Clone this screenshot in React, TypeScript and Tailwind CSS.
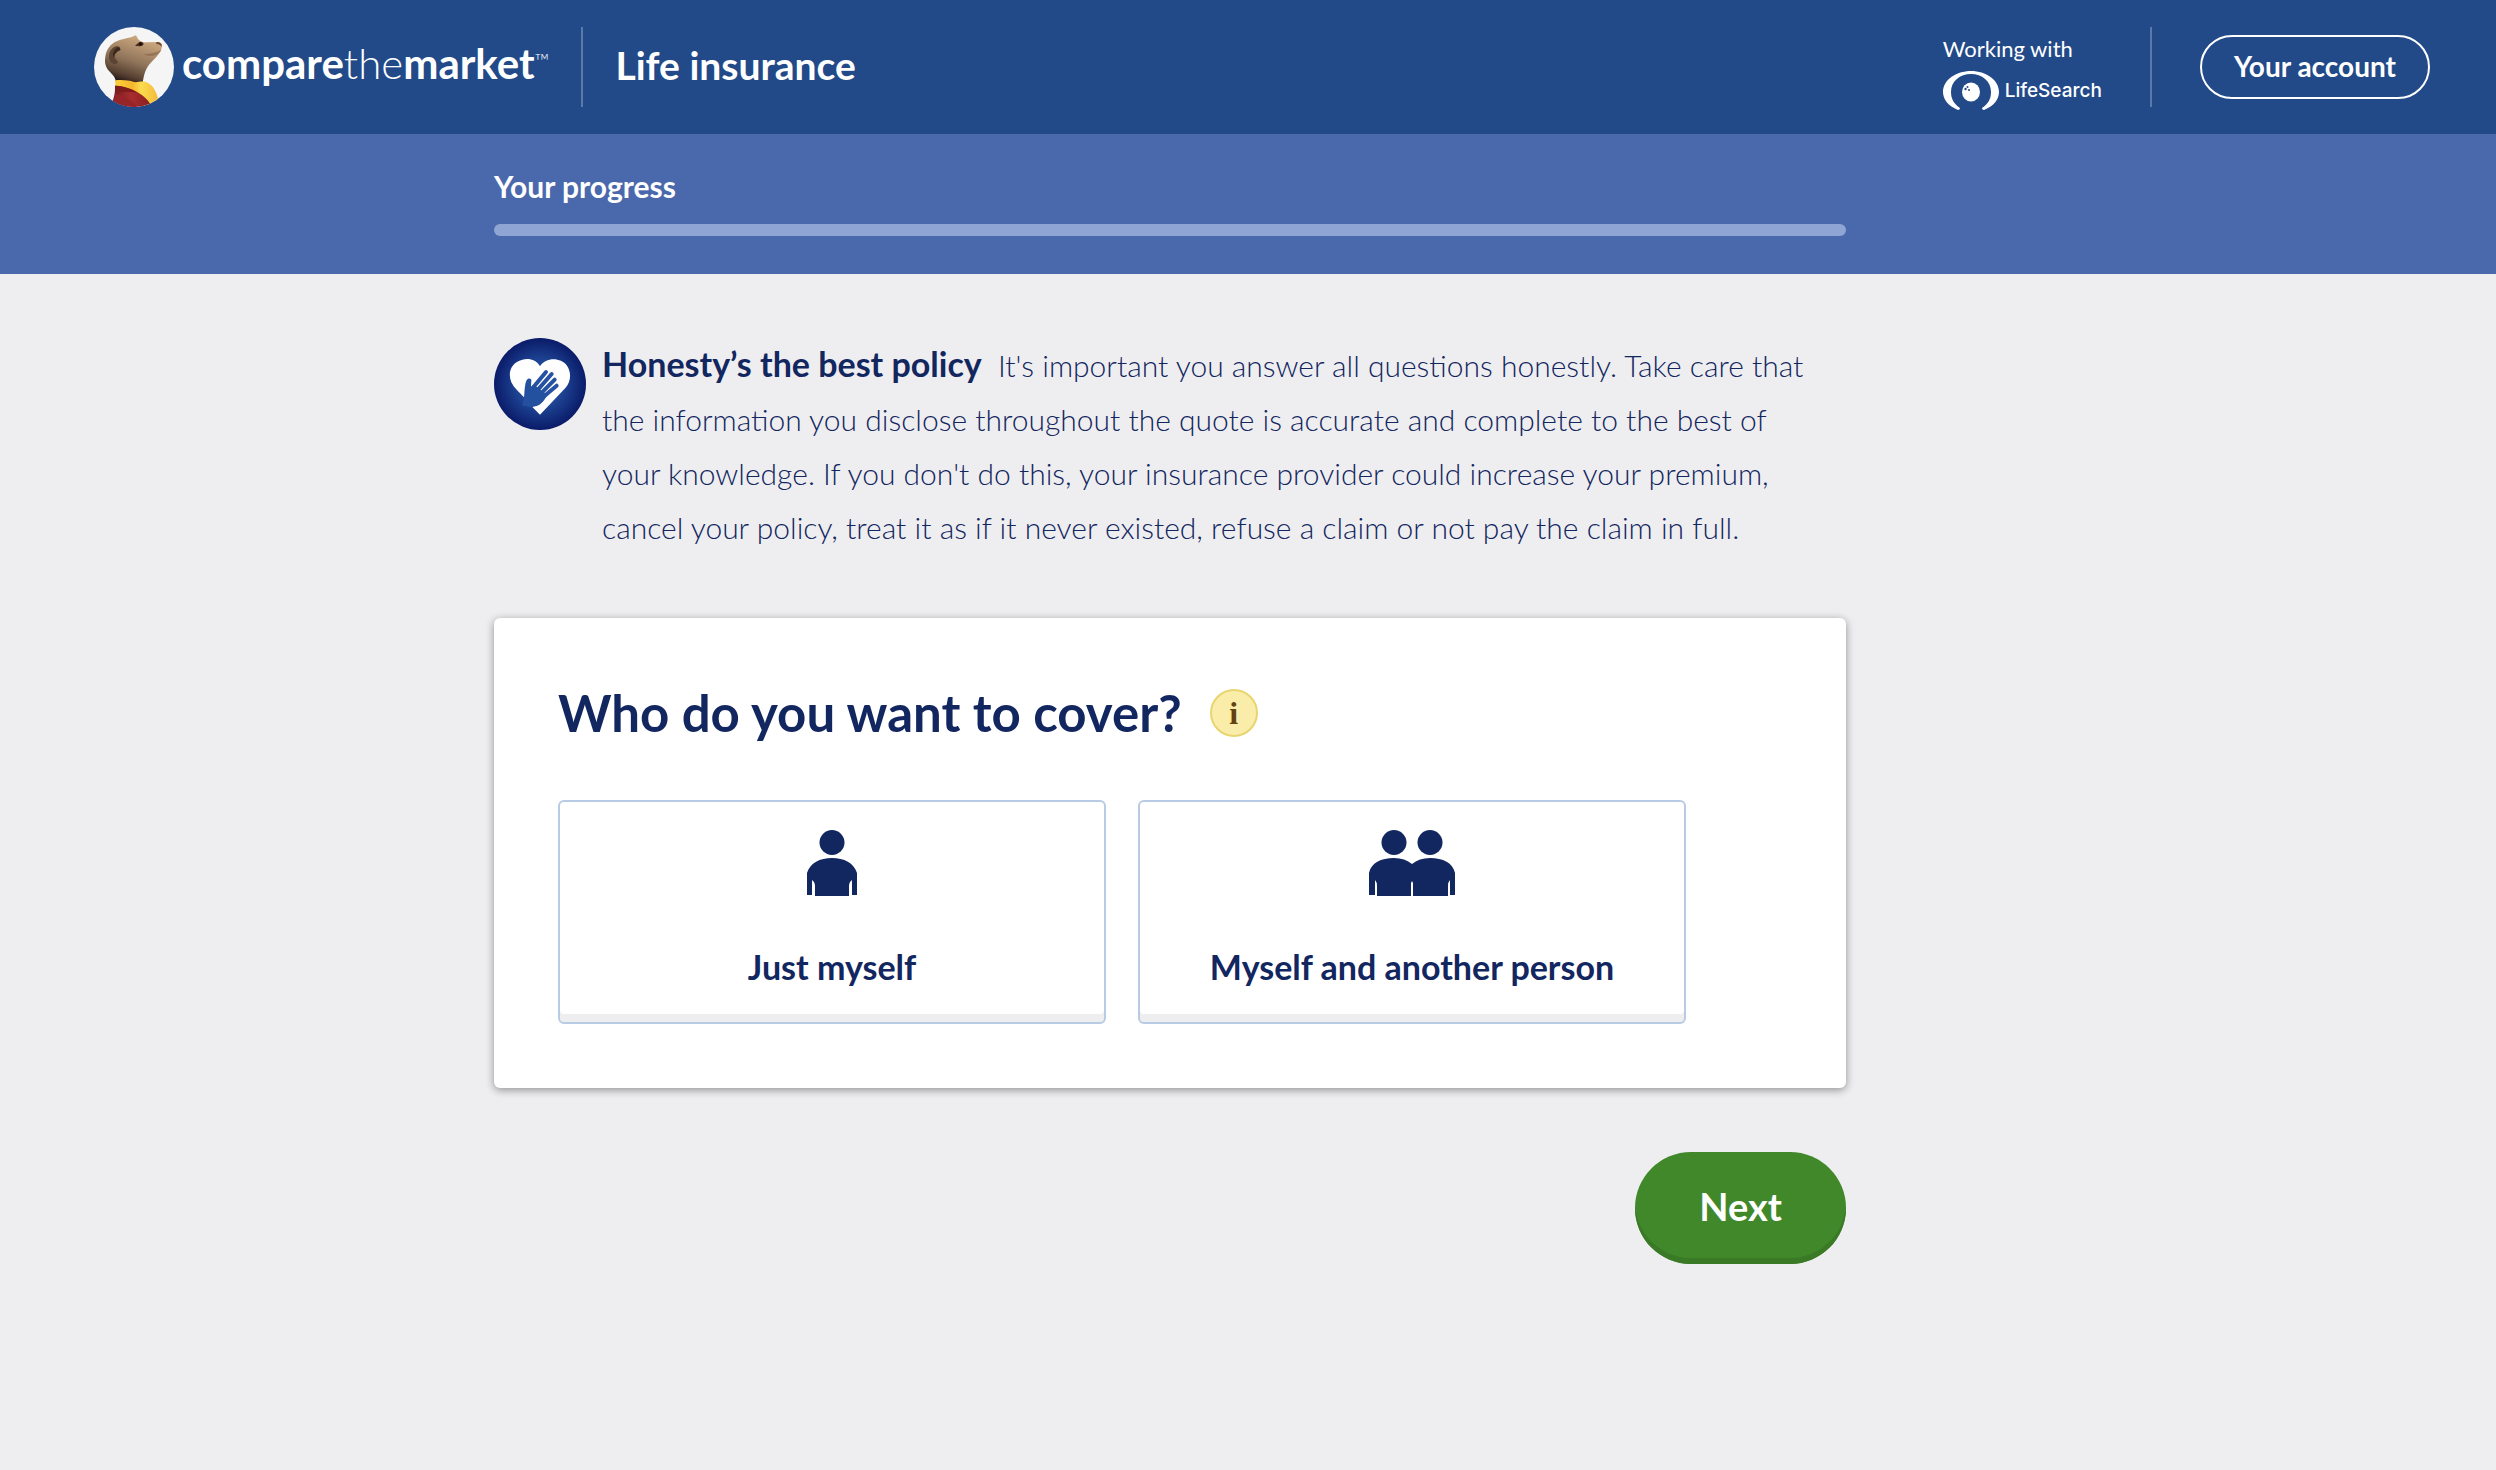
import React, { useState } from 'react';

const MeerkatIcon: React.FC = () => (
  <svg className="size-20 shrink-0" viewBox="12 15 240 240" aria-hidden="true">
    <defs>
      <linearGradient id="fur" x1="0.7" y1="0.1" x2="0.35" y2="1">
        <stop offset="0" stopColor="#c9a57c" />
        <stop offset="0.5" stopColor="#8f745a" />
        <stop offset="0.8" stopColor="#5a4334" />
        <stop offset="1" stopColor="#1f1210" />
      </linearGradient>
      <linearGradient id="scarf" x1="0" y1="0" x2="1" y2="0">
        <stop offset="0" stopColor="#fbd03a" />
        <stop offset="0.4" stopColor="#f6b62c" />
        <stop offset="0.6" stopColor="#fbdc4e" />
        <stop offset="1" stopColor="#f3b93a" />
      </linearGradient>
      <linearGradient id="coat" x1="0" y1="0" x2="1" y2="0">
        <stop offset="0" stopColor="#6d1a1f" />
        <stop offset="0.5" stopColor="#a92c2f" />
        <stop offset="1" stopColor="#86201f" />
      </linearGradient>
      <clipPath id="badge">
        <circle cx="132" cy="135" r="120" />
      </clipPath>
    </defs>
    <circle cx="132" cy="135" r="120" fill="#f5f5f6" />
    <g clipPath="url(#badge)">
      <path
        d="M78 186 C78 166 70 162 58 148 C46 134 43 122 46 104 C49 82 62 66 80 58 C100 49 118 50 138 40 C142 46 142 50 148 55 C154 60 160 62 170 61 L204 60 C214 61 218 68 215 78 C212 92 200 104 188 116 C172 131 162 148 158 184 Z"
        fill="url(#fur)"
      />
      <path d="M158 95 C178 98 198 92 214 84 C204 102 180 108 158 95" fill="#8b6a4c" opacity="0.7" />
      <path d="M200 60 C210 60 217 65 215 74 C212 69 206 66 198 65 Z" fill="#6b4a36" />
      <path d="M134 70 C142 68 146 58 153 59 C160 60 162 64 160 68 C154 74 142 74 134 70" fill="#4a2f22" />
      <path d="M148 62 C153 60 158 64 155 70 C150 72 146 68 148 62" fill="#190b08" />
      <path d="M84 72 C68 72 56 88 57 106 C58 120 68 128 78 126 C88 124 82 116 77 112 C72 104 74 90 88 82 Z" fill="#5c4432" />
      <path d="M88 74 C74 78 66 92 70 106 C74 96 80 88 92 84 Z" fill="#3c281d" />
      <path d="M76 175 C98 173 116 175 132 180 C142 182 152 177 166 179 C190 186 202 214 205 236 L180 262 L110 230 L76 200 Z" fill="url(#scarf)" />
      <path d="M75 191 C108 192 160 208 184 250 L140 262 L62 252 C70 234 76 218 75 191" fill="url(#coat)" />
      <path d="M75 217 C96 220 128 232 142 256 L62 252 C72 236 75 228 75 217" fill="#96252a" />
      <path d="M75 191 C98 191 124 200 142 212 C120 208 98 208 76 212 Z" fill="#7c1d1c" />
    </g>
  </svg>
);

const LifeSearchIcon: React.FC = () => (
  <svg className="h-10 w-14 shrink-0" viewBox="0 0 56 40" fill="#fff" aria-hidden="true">
    <path d="M15 39 C5 35 0 28 0 21 C0 9 13 0 28 0 C43 0 56 9 56 21 C56 28 51 35 41 39 Q39 39 39 37 C45 33 48 28 48 21 C48 10 39 3 28 3 C17 3 8 10 8 21 C8 28 11 33 17 37 Q17 39 15 39 Z" />
    <ellipse cx="28" cy="21" rx="9" ry="9.5" />
    <circle cx="26" cy="19" r="1" fill="#224a89" />
    <circle cx="22.5" cy="18" r="1.2" fill="#224a89" />
    <circle cx="24.5" cy="16" r="1" fill="#224a89" />
  </svg>
);

const HonestyIcon: React.FC = () => (
  <svg className="size-[92px] shrink-0" viewBox="12 12 276 276" aria-hidden="true">
    <defs>
      <radialGradient id="disc">
        <stop offset="0" stopColor="#2756a6" />
        <stop offset="0.5" stopColor="#1e4594" />
        <stop offset="1" stopColor="#0a1b69" />
      </radialGradient>
    </defs>
    <circle cx="150" cy="150" r="138" fill="url(#disc)" />
    <path
      d="M150 97 C139 77 117 72 97 77 C64 85 52 115 64 145 C72 162 86 173 102 190 L127 219 L150 242 L226 162 C244 143 244 113 231 95 C211 69 167 70 150 97 Z"
      fill="#fff"
    />
    <g stroke="#2552a2" strokeWidth="12" strokeLinecap="round">
      <path d="M130 160 L168 114" />
      <path d="M142 169 L185 120" />
      <path d="M150 181 L194 137" />
      <path d="M155 193 L200 155" />
    </g>
    <path
      d="M102 191 C104 168 104 150 110 138 C114 131 124 132 124 139 L123 158 L130 153 L146 162 L160 176 L176 178 C166 194 158 208 145 214 C139 217 132 218 126 220 L96 214 Z"
      fill="#2450a0"
    />
  </svg>
);

const SinglePersonIcon: React.FC = () => (
  <svg className="h-[66px] w-[50px]" viewBox="0 0 50 66" fill="currentColor" aria-hidden="true">
    <circle cx="25" cy="12.5" r="12.5" />
    <path d="M0 65 V43 C3 33 13 28 25 28 C37 28 47 33 50 43 V65 H45 V50 Q42 52 42 56 V66 H8 V56 Q8 52 5 50 V65 Z" />
  </svg>
);

const TwoPeopleIcon: React.FC = () => (
  <svg className="h-[66px] w-[86px]" viewBox="0 0 86 66" fill="currentColor" aria-hidden="true">
    <circle cx="25" cy="12.5" r="12.5" />
    <circle cx="61" cy="12.5" r="12.5" />
    <path d="M0 65 V43 C2 33 12 28 25 28 Q36 28 43 34 Q50 28 61 28 C74 28 84 33 86 43 V65 H81 V50 Q79 52 79 56 V66 H44 V53 L43 51 L42 53 V66 H8 V56 Q8 52 6 50 V65 Z" />
  </svg>
);

interface OptionProps {
  label: string;
  icon: React.ReactNode;
  selected: boolean;
  onSelect: () => void;
}

const CoverOption: React.FC<OptionProps> = ({ label, icon, selected, onSelect }) => (
  <button
    type="button"
    aria-pressed={selected}
    onClick={onSelect}
    className="flex flex-1 flex-col items-center justify-between rounded-md border-2 border-[#b9cbe4] bg-white px-6 pt-7 pb-8 shadow-[inset_0_-8px_0_#eeeef0] aria-pressed:border-[#12265f]"
  >
    {icon}
    <span className="mt-12 text-[34px] leading-[46px] font-bold">{label}</span>
  </button>
);

export default function App() {
  const [cover, setCover] = useState('');

  return (
    <div className="min-h-screen bg-[#eeeef0] font-[Lato,sans-serif] text-[#12265f]">
      <header className="flex h-[134px] items-center justify-between bg-[#224a89] pr-[66px] pl-[94px] text-white">
        <div className="flex items-center">
          <a href="#" className="flex items-center gap-2" aria-label="comparethemarket home">
            <MeerkatIcon />
            <span className="flex items-start pb-2 text-[42px] leading-none">
              <b className="font-bold">compare</b>
              <span className="font-light">the</span>
              <b className="font-bold">market</b>
              <span className="text-[20px] leading-9 font-light">™</span>
            </span>
          </a>
          <div className="ml-8 h-20 w-0.5 bg-[#5b7aab]" />
          <h1 className="ml-8 pb-1 text-[39px] leading-none font-bold">Life insurance</h1>
        </div>
        <div className="flex items-center gap-12">
          <div className="flex flex-col gap-1 pt-2">
            <span className="text-[22px] leading-9">Working with</span>
            <a href="#" className="flex items-center gap-1.5">
              <LifeSearchIcon />
              <span className="font-[Inter,sans-serif] text-[19px] font-medium">LifeSearch</span>
            </a>
          </div>
          <div className="h-20 w-0.5 bg-[#5b7aab]" />
          <button type="button" className="h-16 rounded-full border-2 border-white px-8 pb-0.5 text-[28px] font-bold">
            Your account
          </button>
        </div>
      </header>

      <section className="bg-[#4a69ac]">
        <div className="mx-auto h-[140px] max-w-[1508px] pt-8 pr-[156px] text-white">
          <p id="progress-label" className="text-3xl leading-10 font-bold">Your progress</p>
          <div
            role="progressbar"
            aria-labelledby="progress-label"
            aria-valuenow={0}
            className="mt-[18px] h-3 rounded-full bg-[#8fa5d3]"
          />
        </div>
      </section>

      <main className="mx-auto max-w-[1508px] pt-16 pr-[156px] pb-16">
        <div className="flex gap-4">
          <HonestyIcon />
          <p className="pr-5 text-3xl leading-[54px] font-light">
            <strong className="mr-2 text-[34px] leading-10 font-bold">Honesty’s the best policy</strong> It's important you
            answer all questions honestly. Take care that the information you disclose throughout the quote is
            accurate and complete to the best of your knowledge. If you don't do this, your insurance provider
            could increase your premium, cancel your policy, treat it as if it never existed, refuse a claim or
            not pay the claim in full.
          </p>
        </div>

        <section className="mt-16 rounded-md bg-white p-16 shadow-[0_2px_8px_rgba(0,0,0,0.4)]">
          <div className="flex items-center gap-7">
            <h2 className="text-[51px] leading-[62px] font-bold">Who do you want to cover?</h2>
            <button
              type="button"
              aria-label="More information"
              className="size-12 rounded-full border-2 border-[#e8d570] bg-[#f9eda9] font-['Liberation_Serif',serif] text-[32px] leading-none font-bold text-[#64420f]"
            >
              i
            </button>
          </div>
          <div className="mt-14 mr-24 flex gap-8">
            <CoverOption
              label="Just myself"
              icon={<SinglePersonIcon />}
              selected={cover === 'single'}
              onSelect={() => setCover('single')}
            />
            <CoverOption
              label="Myself and another person"
              icon={<TwoPeopleIcon />}
              selected={cover === 'joint'}
              onSelect={() => setCover('joint')}
            />
          </div>
        </section>

        <div className="mt-16 flex justify-end">
          <button
            type="button"
            className="h-28 rounded-full bg-[#41882b] px-16 pb-1 text-[38px] font-bold text-white shadow-[inset_0_-6px_0_#3a7a27]"
          >
            Next
          </button>
        </div>
      </main>
    </div>
  );
}
